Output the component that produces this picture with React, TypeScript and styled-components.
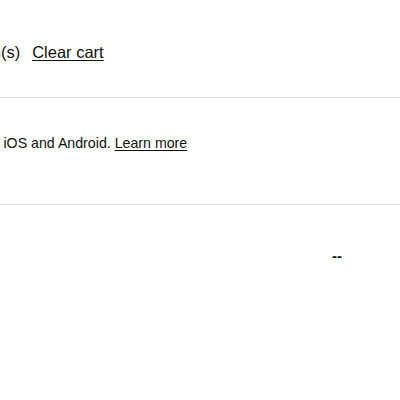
import React from 'react'
import styled, { createGlobalStyle } from 'styled-components'

const Global = createGlobalStyle`
  html, body { margin: 0; padding: 0; background: #fff; overflow: hidden; }
  body { font-family: "Liberation Sans", Arial, sans-serif; color: #111; }
`

const Page = styled.div`
  width: 400px;
  height: 400px;
  overflow: hidden;
`

const Sheet = styled.div`
  margin-left: -160px;
  width: 560px;
`

const Section = styled.div<{ $top: number; $bottom: number }>`
  padding: ${(p) => p.$top}px 0 ${(p) => p.$bottom}px 0;
  border-bottom: 1px solid #e4e4e4;
`

const CartRow = styled.div`
  display: flex;
  align-items: baseline;
  gap: 12px;
  padding-left: 5px;
  font-size: 16.5px;
  line-height: 20px;
`

const Info = styled.p`
  margin: 0 0 0 -14px;
  font-size: 14.2px;
  line-height: 18px;
`

const TextLink = styled.a`
  color: #111;
  text-decoration: underline;
  text-underline-offset: 2px;
  cursor: pointer;
`

const Totals = styled.div`
  display: grid;
  grid-template-columns: 492px auto;
  padding-top: 42px;
  font-size: 15px;
  font-weight: 700;
`

export default function App() {
  return (
    <Page>
      <Global />
      <Sheet>
        <Section $top={42} $bottom={35}>
          <CartRow>
            <span>Shopping cart: 1 item(s)</span>
            <TextLink>Clear cart</TextLink>
          </CartRow>
        </Section>
        <Section $top={36} $bottom={52}>
          <Info>
            Shop faster with our app on iOS and Android. <TextLink>Learn more</TextLink>
          </Info>
        </Section>
        <Totals>
          <span />
          <span>--</span>
        </Totals>
      </Sheet>
    </Page>
  )
}
